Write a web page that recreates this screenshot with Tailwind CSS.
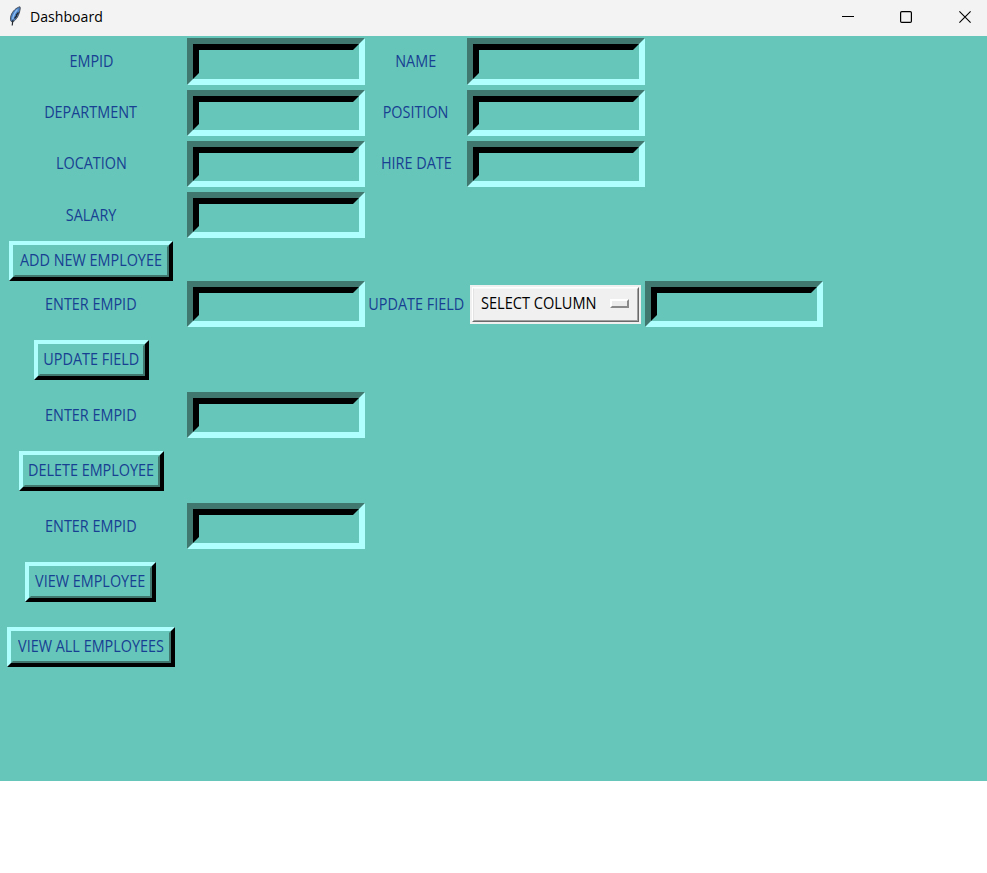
<!DOCTYPE html>
<html lang="en">
<head>
<meta charset="utf-8">
<title>Dashboard</title>
<script src="https://cdn.jsdelivr.net/npm/@tailwindcss/browser@4"></script>
</head>
<body class="bg-white font-['Open_Sans','Noto_Sans',sans-serif] text-base leading-5 text-[#173f92] whitespace-nowrap overflow-hidden">
<header class="flex h-9 items-center bg-[#f3f3f3] text-[15px] text-black">
  <svg class="ml-2 mb-1 w-[14px] h-5 shrink-0" viewBox="0 0 14 20">
    <path d="M12 0.8C8.500 1.500 4.500 5 3 9.500C2 13 2.500 15.500 4 16C7 15.500 10.500 10.500 11.500 6C12 4 12.500 2 12 .8Z" fill="#4a83c8" stroke="#4a4f58" stroke-width="1"/>
    <path d="M9.500 3.500C7 6 5.200 10 4.500 14" fill="none" stroke="#8dbcf0" stroke-width="1.300"/>
    <path d="M10.500 6.500L8 9.500M9 9.500L6.500 12.500M5 13.500L4.200 19.500" fill="none" stroke="#22262c" stroke-width="1.200"/>
  </svg>
  <h1 class="ml-2 mb-[4px] origin-left scale-x-[.94]">Dashboard</h1>
  <div class="ml-auto flex items-center gap-[46px] pr-4 mb-[2px]">
    <svg class="w-3 h-3" viewBox="0 0 12 12"><path d="M0 5.500H12" stroke="#000"/></svg>
    <svg class="w-3 h-3" viewBox="0 0 12 12"><rect x=".6" y=".6" width="10.800" height="10.800" rx="1.200" fill="none" stroke="#000" stroke-width="1.200"/></svg>
    <svg class="ml-[1px] w-3 h-3" viewBox="0 0 12 12"><path d="M.4.4L11.600 11.600M11.600.4L.4 11.600" stroke="#000" stroke-width="1.100"/></svg>
  </div>
</header>
<main class="grid h-[745px] content-start grid-cols-[187px_178px_102px_178px_178px] grid-rows-[51px_51px_52px_51px_40px_46px_65px_46px_65px_46px_65px_65px] bg-[#67c6ba]">
  <label class="col-start-1 row-start-1 flex items-center justify-center pb-[2px] pr-[5px]"><span class="scale-x-[.9]">EMPID</span></label>
  <div class="col-start-2 row-start-1 my-[2px] border-6 border-t-[#40786f] border-l-[#40786f] border-b-[#b0ffff] border-r-[#b0ffff]"><div class="h-full border-6 border-t-black border-l-black border-b-[#67c6ba] border-r-[#67c6ba]"></div></div>
  <label class="col-start-3 row-start-1 flex items-center justify-center pb-[2px]"><span class="scale-x-[.9]">NAME</span></label>
  <div class="col-start-4 row-start-1 my-[2px] border-6 border-t-[#40786f] border-l-[#40786f] border-b-[#b0ffff] border-r-[#b0ffff]"><div class="h-full border-6 border-t-black border-l-black border-b-[#67c6ba] border-r-[#67c6ba]"></div></div>

  <label class="col-start-1 row-start-2 flex items-center justify-center pb-[2px] pr-[5px]"><span class="scale-x-[.9]">DEPARTMENT</span></label>
  <div class="col-start-2 row-start-2 mt-[3px] mb-[2px] border-6 border-t-[#40786f] border-l-[#40786f] border-b-[#b0ffff] border-r-[#b0ffff]"><div class="h-full border-6 border-t-black border-l-black border-b-[#67c6ba] border-r-[#67c6ba]"></div></div>
  <label class="col-start-3 row-start-2 flex items-center justify-center pb-[2px]"><span class="scale-x-[.9]">POSITION</span></label>
  <div class="col-start-4 row-start-2 mt-[3px] mb-[2px] border-6 border-t-[#40786f] border-l-[#40786f] border-b-[#b0ffff] border-r-[#b0ffff]"><div class="h-full border-6 border-t-black border-l-black border-b-[#67c6ba] border-r-[#67c6ba]"></div></div>

  <label class="col-start-1 row-start-3 flex items-center justify-center pb-[2px] pr-[5px]"><span class="scale-x-[.9]">LOCATION</span></label>
  <div class="col-start-2 row-start-3 my-[3px] border-6 border-t-[#40786f] border-l-[#40786f] border-b-[#b0ffff] border-r-[#b0ffff]"><div class="h-full border-6 border-t-black border-l-black border-b-[#67c6ba] border-r-[#67c6ba]"></div></div>
  <label class="col-start-3 row-start-3 flex items-center justify-center pb-[2px]"><span class="scale-x-[.9]">HIRE DATE</span></label>
  <div class="col-start-4 row-start-3 my-[3px] border-6 border-t-[#40786f] border-l-[#40786f] border-b-[#b0ffff] border-r-[#b0ffff]"><div class="h-full border-6 border-t-black border-l-black border-b-[#67c6ba] border-r-[#67c6ba]"></div></div>

  <label class="col-start-1 row-start-4 flex items-center justify-center pb-[2px] pr-[5px]"><span class="scale-x-[.9]">SALARY</span></label>
  <div class="col-start-2 row-start-4 mt-[2px] mb-[3px] border-6 border-t-[#40786f] border-l-[#40786f] border-b-[#b0ffff] border-r-[#b0ffff]"><div class="h-full border-6 border-t-black border-l-black border-b-[#67c6ba] border-r-[#67c6ba]"></div></div>

  <div class="col-start-1 row-start-5 flex justify-center pr-[5px]">
    <button class="h-10 w-[164px] border-4 border-t-[#b0ffff] border-l-[#b0ffff] border-b-black border-r-black"><span class="flex h-full items-center justify-center border-2 border-t-[#67c6ba] border-l-[#67c6ba] border-b-[#40786f] border-r-[#40786f] pb-[2px]"><span class="scale-x-[.9]">ADD NEW EMPLOYEE</span></span></button>
  </div>

  <label class="col-start-1 row-start-6 flex items-center justify-center pr-[5px]"><span class="scale-x-[.9]">ENTER EMPID</span></label>
  <div class="col-start-2 row-start-6 border-6 border-t-[#40786f] border-l-[#40786f] border-b-[#b0ffff] border-r-[#b0ffff]"><div class="h-full border-6 border-t-black border-l-black border-b-[#67c6ba] border-r-[#67c6ba]"></div></div>
  <label class="col-start-3 row-start-6 flex items-center justify-center"><span class="scale-x-[.9]">UPDATE FIELD</span></label>
  <div class="col-start-4 row-start-6 ml-[3px] mr-1 mt-[4px] mb-[3px] bg-[#f0f0f0] p-[2px]">
    <button class="flex h-full w-full items-center border border-t-white border-l-white border-b-[#696969] border-r-[#696969] text-black">
      <span class="flex h-full w-full items-center justify-between border border-t-[#f8f8f8] border-l-[#e3e3e3] border-b-[#a0a0a0] border-r-[#a0a0a0] pr-[8px] pl-[7px]"><span class="mb-[3px] w-[116px] origin-left scale-x-[.91] text-left">SELECT COLUMN</span><span class="mb-[2px] h-[9px] w-[19px] border-2 border-t-white border-l-white border-b-[#8a8a8a] border-r-[#8a8a8a] bg-[#ececec]"></span></span>
    </button>
  </div>
  <div class="col-start-5 row-start-6 border-6 border-t-[#40786f] border-l-[#40786f] border-b-[#b0ffff] border-r-[#b0ffff]"><div class="h-full border-6 border-t-black border-l-black border-b-[#67c6ba] border-r-[#67c6ba]"></div></div>

  <div class="col-start-1 row-start-7 flex justify-center pt-[13px] pr-[5px]">
    <button class="h-10 w-[115px] border-4 border-t-[#b0ffff] border-l-[#b0ffff] border-b-black border-r-black"><span class="flex h-full items-center justify-center border-2 border-t-[#67c6ba] border-l-[#67c6ba] border-b-[#40786f] border-r-[#40786f] pb-[2px]"><span class="scale-x-[.9]">UPDATE FIELD</span></span></button>
  </div>

  <label class="col-start-1 row-start-8 flex items-center justify-center pr-[5px]"><span class="scale-x-[.9]">ENTER EMPID</span></label>
  <div class="col-start-2 row-start-8 border-6 border-t-[#40786f] border-l-[#40786f] border-b-[#b0ffff] border-r-[#b0ffff]"><div class="h-full border-6 border-t-black border-l-black border-b-[#67c6ba] border-r-[#67c6ba]"></div></div>

  <div class="col-start-1 row-start-9 flex justify-center pt-[13px] pr-[5px]">
    <button class="h-10 w-[145px] border-4 border-t-[#b0ffff] border-l-[#b0ffff] border-b-black border-r-black"><span class="flex h-full items-center justify-center border-2 border-t-[#67c6ba] border-l-[#67c6ba] border-b-[#40786f] border-r-[#40786f] pb-[2px]"><span class="scale-x-[.9]">DELETE EMPLOYEE</span></span></button>
  </div>

  <label class="col-start-1 row-start-10 flex items-center justify-center pr-[5px]"><span class="scale-x-[.9]">ENTER EMPID</span></label>
  <div class="col-start-2 row-start-10 border-6 border-t-[#40786f] border-l-[#40786f] border-b-[#b0ffff] border-r-[#b0ffff]"><div class="h-full border-6 border-t-black border-l-black border-b-[#67c6ba] border-r-[#67c6ba]"></div></div>

  <div class="col-start-1 row-start-11 flex justify-center pt-[13px] pr-[6px]">
    <button class="h-10 w-[131px] border-4 border-t-[#b0ffff] border-l-[#b0ffff] border-b-black border-r-black"><span class="flex h-full items-center justify-center border-2 border-t-[#67c6ba] border-l-[#67c6ba] border-b-[#40786f] border-r-[#40786f] pb-[2px]"><span class="scale-x-[.9]">VIEW EMPLOYEE</span></span></button>
  </div>
  <div class="col-start-1 row-start-12 flex justify-center pt-[13px] pr-[5px]">
    <button class="h-10 w-[168px] border-4 border-t-[#b0ffff] border-l-[#b0ffff] border-b-black border-r-black"><span class="flex h-full items-center justify-center border-2 border-t-[#67c6ba] border-l-[#67c6ba] border-b-[#40786f] border-r-[#40786f] pb-[2px]"><span class="scale-x-[.9]">VIEW ALL EMPLOYEES</span></span></button>
  </div>
</main>
</body>
</html>
